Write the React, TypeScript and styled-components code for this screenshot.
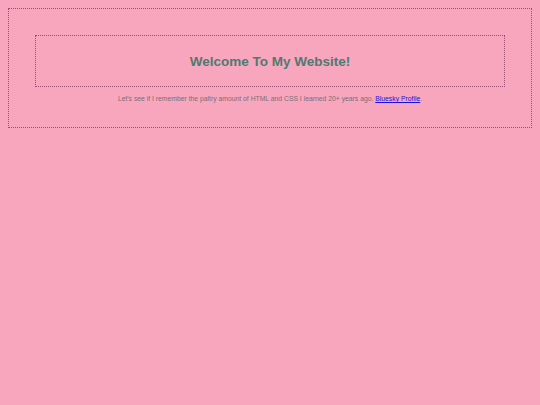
import React from "react";
import styled, { createGlobalStyle } from "styled-components";

const Global = createGlobalStyle`
  html, body { background: #f8a6be; }
  body { margin: 8px; font-family: "Liberation Sans", Arial, sans-serif; }
`;

const Outer = styled.div`
  border: 1px dotted #9b4f70;
  padding: 26px 26px 24px;
`;

const Banner = styled.header`
  border: 1px dotted #9b4f70;
  height: 50px;
  display: flex;
  align-items: center;
  justify-content: center;
`;

const Title = styled.h1`
  margin: 0;
  font-size: 13.5px;
  font-weight: bold;
  color: #4e7a70;
`;

const Intro = styled.p`
  margin: 7px 0 0;
  font-size: 6.8px;
  line-height: 9px;
  color: #7a6e74;
  text-align: center;
`;

const Link = styled.a`
  color: #1a10e0;
`;

export default function App() {
  return (
    <>
      <Global />
      <Outer>
        <Banner>
          <Title>Welcome To My Website!</Title>
        </Banner>
        <Intro>
          Let's see if I remember the paltry amount of HTML and CSS I learned 20+ years ago.{" "}
          <Link href="#">Bluesky Profile</Link>.
        </Intro>
      </Outer>
    </>
  );
}
